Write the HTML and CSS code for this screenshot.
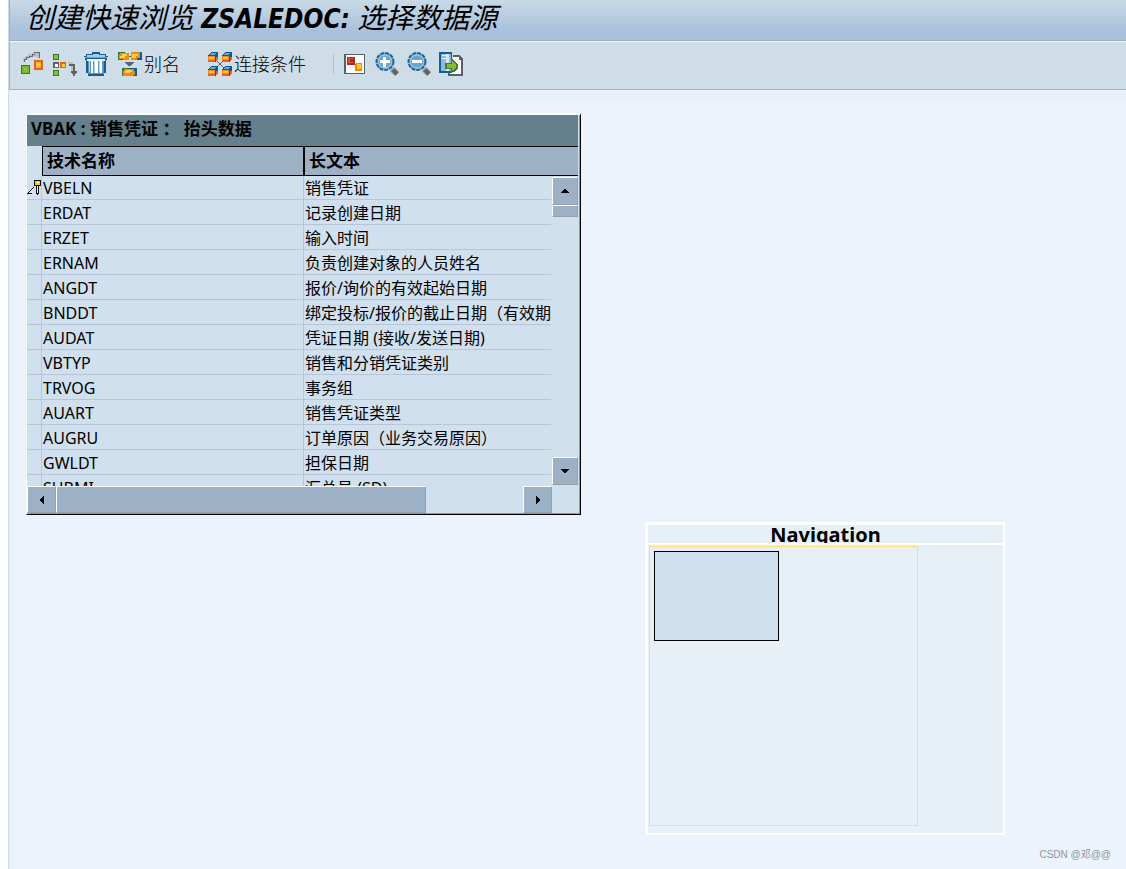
FILE: index.html
```html
<!DOCTYPE html>
<html lang="zh-CN">
<head>
<meta charset="utf-8">
<title>创建快速浏览 ZSALEDOC: 选择数据源</title>
<link rel="stylesheet" href="styles.css">
</head>
<body>
<div class="app">
  <header class="title-bar">
    <h1 class="title">创建快速浏览 <b class="title-name">ZSALEDOC:</b> 选择数据源</h1>
  </header>
  <div class="toolbar" role="toolbar" aria-label="工具栏">
    <button class="tool" type="button" aria-label="插入表">
      <svg class="icon" viewBox="0 0 24 24" shape-rendering="crispEdges">
        <path d="M4 10V7h2V5h3V3h4V2h3M13 1h5v5M17 2l-3 3" fill="none" stroke="#b9bfc4" stroke-width="2"/>
        <path d="M4 10V7h2V5h3V4h3V2h3M14 .5h5v5" fill="none" stroke="#646a6e"/>
        <path fill="#3a7434" d="M1 13h9v9H1z"/><path fill="#7cb82f" d="M2 14h7v7H2z"/><path fill="#8fc840" d="M4 16h3v3H4z"/>
        <path fill="#e2622b" d="M14 8h9v10h-9z"/><path fill="#fbb81f" d="M16 10h5v6h-5z"/><path fill="#ffd23a" d="M17 11h3v3h-3z"/>
      </svg>
    </button>
    <button class="tool" type="button" aria-label="建议连接">
      <svg class="icon" viewBox="0 0 24 24" shape-rendering="crispEdges">
        <path fill="#3a7434" d="M1 2h6v6H1zM1 18h6v6H1z"/><path fill="#86c232" d="M2 3h4v4H2zM2 19h4v4H2z"/>
        <path fill="#5f6365" d="M1 10h6v6H1z"/><path fill="#fff" d="M3 12h3v3H3z"/>
        <path fill="#e2622b" d="M8 10h6v6H8z"/><path fill="#ffcf3b" d="M10 12h3v3h-3z"/>
        <path fill="#b9bfc4" d="M16 10h5v2h-5zM19 12h2v7h-2z"/>
        <path fill="#5f6365" d="M17 12h6v7h2v2h-1v1h-1v2h-2v-2h-1v-1h-1v-2h2v-5h-4z"/>
      </svg>
    </button>
    <button class="tool" type="button" aria-label="删除">
      <svg class="icon" viewBox="0 0 24 24" shape-rendering="crispEdges">
        <path fill="#145f92" d="M8 0h8v2h6v2h2v4h-2v13h-2v3H4v-3H2V8H0V4h2V2h6z"/>
        <path fill="#a9cbe4" d="M9 2h6v1h6v2H3V3h6z"/><path fill="#cfdde8" d="M0 5h1v3H0zM23 5h1v3h-1z"/>
        <path fill="#6fa3c9" d="M1 5h22v1H1z"/><path fill="#e8f2fa" d="M3 7h18v2H3z"/>
        <path fill="#5b95be" d="M4 9h16v13H4z"/><path fill="#fff" d="M7 9h2v12H7zM11 9h3v12h-3zM16 9h2v12h-2z"/>
        <path fill="#b8d6ea" d="M5 9h1v11H5zM10 9h1v12h-1zM15 9h1v12h-1z"/>
      </svg>
    </button>
    <button class="tool tool-alias" type="button">
      <svg class="icon" viewBox="0 0 24 24" shape-rendering="crispEdges">
        <path fill="#357338" d="M0 0h7v2H2v6H0z"/><path fill="#f08a16" d="M2 1h9v7H1V5h1z"/><path fill="#ffd23a" d="M4 2h5v2H7v2H2V4h2z"/><path fill="#8abf35" d="M1 2h1v4H1z"/><path fill="#357338" d="M0 7h5v1H0z"/>
        <path fill="#085f92" d="M17 0h7v8h-5V6h3V2h-5z"/><path fill="#f08a16" d="M13 0h9v6h-3v2h-6z"/><path fill="#ffd23a" d="M14 2h6v2h-2v2h-4z"/>
        <path fill="#5f6365" d="M7 10h9v1h-1v1h-1v1h-1v1h-3v-1H9v-1H8v-1H7zM11 4h2v1h-2z"/>
        <path fill="#357338" d="M4 16h7v2H6v4h1v2H4z"/><path fill="#085f92" d="M11 16h8v8h-8z"/><path fill="#f08a16" d="M6 17h10v2h1v4h-2v1H5v-5h1z"/><path fill="#ffd23a" d="M8 18h6v2h-2v1H7v-2h1z"/>
      </svg>
      <span>别名</span>
    </button>
    <button class="tool tool-join" type="button">
      <svg class="icon" viewBox="0 0 24 24" shape-rendering="crispEdges">
        <defs><g id="cube">
          <path fill="#075c91" d="M3 0h7v7H9v2H8v1H6V4H0V3h1V2h1V1h1z"/><path fill="#68a6cf" d="M3 1h5v1H7v1H2V2h1z"/>
          <path fill="#f08a16" d="M0 4h7v5H0z"/><path fill="#ffc438" d="M1 5h5v2H1z"/><path fill="#e4632a" d="M0 8h7v2H0zM8 5h2v3H9v1H8z"/>
        </g></defs>
        <path d="M8 8l8 8M16 8l-8 8" stroke="#5f6365" stroke-width="1"/>
        <use href="#cube"/><use href="#cube" x="14"/><use href="#cube" y="14"/><use href="#cube" x="14" y="14"/>
      </svg>
      <span>连接条件</span>
    </button>
    <span class="divider"></span>
    <button class="tool" type="button" aria-label="导航">
      <svg class="icon" viewBox="0 0 24 24" shape-rendering="crispEdges">
        <path fill="#5b6064" d="M1 2h21v20H1z"/><path fill="#fff" d="M3 3h18v18H3z"/>
        <path fill="#b7261b" d="M4 5h8v8H4z"/><path fill="#d9532c" d="M5 6h5v5H5z"/><path fill="#b7261b" d="M7 7h3v3H7z"/>
        <path fill="#ef8614" d="M13 11h6v8h-7v-7h1z"/><path fill="#ffce2e" d="M14 12h4v5h-4z"/>
      </svg>
    </button>
    <button class="tool" type="button" aria-label="放大">
      <svg class="icon" viewBox="0 0 24 24">
        <path d="M17 17l5 5" stroke="#8d9499" stroke-width="6"/><path d="M18 18l4 4" stroke="#5f6365" stroke-width="4"/>
        <circle cx="10" cy="9.500" r="8.500" fill="#82b2d4" stroke="#1c6698" stroke-width="2" stroke-dasharray="4 1"/>
        <circle cx="10" cy="9.500" r="6.500" fill="#6ca3ca" stroke="#a9cbe2"/>
        <path fill="#fff" d="M8 5h3v3h4v3h-4v4H8v-4H5V8h3z"/>
      </svg>
    </button>
    <button class="tool" type="button" aria-label="缩小">
      <svg class="icon" viewBox="0 0 24 24">
        <path d="M17 17l5 5" stroke="#8d9499" stroke-width="6"/><path d="M18 18l4 4" stroke="#5f6365" stroke-width="4"/>
        <circle cx="10" cy="9.500" r="8.500" fill="#82b2d4" stroke="#1c6698" stroke-width="2" stroke-dasharray="4 1"/>
        <circle cx="10" cy="9.500" r="6.500" fill="#6ca3ca" stroke="#a9cbe2"/>
        <path fill="#fff" d="M5 8h10v3H5z"/>
      </svg>
    </button>
    <button class="tool" type="button" aria-label="导出">
      <svg class="icon" viewBox="0 0 24 24" shape-rendering="crispEdges">
        <path fill="#5b6064" d="M14 3h7v1h1v1h1v1h1v18H9v-3h5z"/><path fill="#fff" d="M14 5h6v3h2v14H11v-1h3z"/>
        <path fill="#126094" d="M0 0h13v21H0z"/><path fill="#8dbbdc" d="M2 2h10v17H2z"/><path fill="#d5e7f3" d="M7 2h3v17H7z"/><path fill="#fff" d="M3 3h4v1H3zM3 6h4v1H3z"/>
        <path fill="#4c7829" d="M6 11h6V7h2v1h1v1h1v1h1v1h1v1h1v5h-1v1h-1v1h-1v1h-4v-3H6z"/><path fill="#82bc32" d="M8 12h5V9h1v1h1v1h1v1h1v4h-1v1h-1v1h-2v-2H8z"/>
      </svg>
    </button>
  </div>
  <main class="workspace">
    <section class="entity" aria-label="VBAK">
      <h2 class="entity-title">VBAK : 销售凭证 ： 抬头数据</h2>
      <div class="entity-view">
        <table class="fields">
          <colgroup><col class="col-key"><col class="col-name"><col class="col-text"><col class="col-bar"></colgroup>
          <thead><tr><td class="corner"></td><th scope="col">技术名称</th><th scope="col" colspan="2">长文本</th></tr></thead>
          <tbody>
            <tr class="key-row"><td><svg class="key" viewBox="0 0 15 17" shape-rendering="crispEdges"><path fill="#111" d="M7 1h7v6h-2v8h-1v1h-1v-1H9V7H7zM0 14h5v1H0zM1 13h1v1H1zM2 12h1v1H2zM3 11h1v1H3zM4 10h1v1H4zM5 9h1v1H5zM6 8h1v1H6z"/><path fill="#f3cc18" d="M8 2h5v4H8z"/><path fill="#fff" d="M10 3h2v1h-2zM10 7h1v7h-1z"/></svg></td><td>VBELN</td><td>销售凭证</td><td></td></tr>
            <tr><td></td><td>ERDAT</td><td>记录创建日期</td><td></td></tr>
            <tr><td></td><td>ERZET</td><td>输入时间</td><td></td></tr>
            <tr><td></td><td>ERNAM</td><td>负责创建对象的人员姓名</td><td></td></tr>
            <tr><td></td><td>ANGDT</td><td>报价/询价的有效起始日期</td><td></td></tr>
            <tr><td></td><td>BNDDT</td><td>绑定投标/报价的截止日期（有效期</td><td></td></tr>
            <tr><td></td><td>AUDAT</td><td>凭证日期 (接收/发送日期)</td><td></td></tr>
            <tr><td></td><td>VBTYP</td><td>销售和分销凭证类别</td><td></td></tr>
            <tr><td></td><td>TRVOG</td><td>事务组</td><td></td></tr>
            <tr><td></td><td>AUART</td><td>销售凭证类型</td><td></td></tr>
            <tr><td></td><td>AUGRU</td><td>订单原因（业务交易原因）</td><td></td></tr>
            <tr><td></td><td>GWLDT</td><td>担保日期</td><td></td></tr>
            <tr><td></td><td>SUBMI</td><td>汇总号 (SD)</td><td></td></tr>
          </tbody>
        </table>
        <div class="vbar">
          <button class="bar-btn" type="button" aria-label="向上滚动"><svg class="arrow" viewBox="0 0 8 8" shape-rendering="crispEdges"><path d="M3 2h2v1h1v1h1v1h1v1H0V5h1V4h1V3h1z"/></svg></button>
          <div class="vthumb"></div>
          <button class="bar-btn bar-end" type="button" aria-label="向下滚动"><svg class="arrow" viewBox="0 0 8 8" shape-rendering="crispEdges"><path d="M0 2h8v1H7v1H6v1H5v1H3V5H2V4H1V3H0z"/></svg></button>
        </div>
      </div>
      <div class="hbar">
        <button class="bar-btn" type="button" aria-label="向左滚动"><svg class="arrow" viewBox="0 0 8 8" shape-rendering="crispEdges"><path d="M6 0v8H5V7H4V6H3V5H2V3h1V2h1V1h1V0z"/></svg></button>
        <div class="hthumb"></div>
        <button class="bar-btn bar-end" type="button" aria-label="向右滚动"><svg class="arrow" viewBox="0 0 8 8" shape-rendering="crispEdges"><path d="M2 0v8h1V7h1V6h1V5h1V3H5V2H4V1H3V0z"/></svg></button>
      </div>
    </section>
    <section class="navigator">
      <h2 class="navigator-title">Navigation</h2>
      <div class="navigator-map"><div class="viewport"><div class="map-node"></div></div></div>
    </section>
    <small class="watermark">CSDN @邓@@</small>
  </main>
</div>
</body>
</html>
```

FILE: styles.css
```css
* { box-sizing: border-box; }

body {
  margin: 0;
  background: #fcfdfe;
  color: #000;
  font: 16px/24px "Noto Sans", "Noto Sans CJK SC", sans-serif;
}

h1, h2 { margin: 0; }

button {
  margin: 0;
  padding: 0;
  border: 0;
  color: inherit;
  font: inherit;
}

.app {
  display: flex;
  flex-direction: column;
  min-height: 100vh;
  margin-left: 8px;
  border-left: 1px solid #cfd9e6;
  background: #e8f0f9;
}

.title-bar {
  height: 41px;
  padding-left: 16px;
  border-bottom: 1px solid #9db1c8;
  border-left: 1px solid #9db1c8;
  background: linear-gradient(#c9dae7, #a9c1db 75%);
}

.title {
  font-size: 28px;
  line-height: 34px;
  font-weight: 400;
  font-style: italic;
  white-space: nowrap;
}

.title-name {
  font-family: "DejaVu Sans Condensed", "DejaVu Sans", sans-serif;
  font-size: 26px;
  font-weight: 700;
}

.toolbar {
  display: flex;
  align-items: center;
  gap: 8px;
  height: 49px;
  padding: 0 0 3px 10px;
  border: solid #a3b6c9;
  border-width: 0 0 1px 1px;
  border-top: 1px solid #f2f7fb;
  background: #cfdde8;
}

.tool {
  display: flex;
  align-items: center;
  gap: 2px;
  background: none;
  font-size: 18px;
  font-weight: 300;
}

.tool-alias { margin-left: 2px; }
.tool-join { margin-left: 20px; }

.icon {
  display: block;
  width: 24px;
  height: 24px;
  overflow: visible;
}

.divider {
  width: 1px;
  height: 20px;
  margin: 0 1px 0 19px;
  background: #a9c1dc;
}

.workspace {
  position: relative;
  flex: 1;
  margin: 12px 0 0 5px;
  background: #ecf3fc;
}

.entity {
  position: absolute;
  top: 11px;
  left: 12px;
  width: 555px;
  border: solid #fff;
  border-width: 2px 1px 1px 1px;
  border-right-color: #000;
  border-bottom-color: #000;
  background: #d1e0ef;
  box-shadow: inset -1px -1px #8f989f;
}

.entity-title {
  height: 31px;
  margin-right: 2px;
  padding-left: 4px;
  background: #65808d;
  font-size: 17px;
  line-height: 28px;
}

.entity-view {
  position: relative;
  height: 340px;
  margin-right: 2px;
  overflow: hidden;
}

.fields {
  width: 100%;
  border-spacing: 0;
  table-layout: fixed;
}

.col-key { width: 15px; }
.col-name { width: 262px; }
.col-bar { width: 27px; }

.fields th {
  height: 30px;
  padding: 0 0 0 4px;
  border: 1px solid #000;
  background: #9db1c6;
  font-size: 17px;
  line-height: 28px;
  text-align: left;
}

.fields th:last-child { border-right: 0; }

.fields td {
  height: 25px;
  padding: 2px 0 0 1px;
  border: solid #b7c6d6;
  border-width: 0 1px 1px 0;
  overflow: hidden;
  line-height: 22px;
  white-space: nowrap;
}

.fields td:nth-child(n+3) { border-right: 0; }
.fields td:last-child { border: 0; }
.fields td:first-child { padding: 0; }
.fields .corner { border: 0; }
.fields .key-row td { height: 24px; line-height: 21px; }

.key {
  display: block;
  width: 15px;
  height: 17px;
}

.vbar {
  position: absolute;
  top: 31px;
  right: 0;
  bottom: 1px;
  display: flex;
  flex-direction: column;
  width: 26px;
}

.bar-btn, .vthumb, .hthumb {
  border: 1px solid #fff;
  border-right-color: #999fa5;
  border-bottom-color: #999fa5;
  background: #9db1c6;
}

.bar-btn {
  display: flex;
  align-items: center;
  justify-content: center;
  width: 28px;
  height: 28px;
}

.vbar .bar-btn { width: 26px; }
.vthumb { height: 12px; }
.vbar .bar-end { margin-top: auto; }

.arrow { width: 8px; height: 8px; }

.hbar {
  display: flex;
  height: 27px;
  margin: 0 28px 1px 0;
}

.hbar .bar-btn { width: 29px; height: 27px; }
.hthumb { width: 370px; }
.hbar .bar-end { margin-left: auto; }

.navigator {
  position: absolute;
  top: 420px;
  left: 631px;
  width: 360px;
  border: 2px solid #fff;
  border-top-width: 3px;
  border-left-width: 3px;
  background: #e8f0f7;
}

.navigator-title {
  height: 20px;
  border-bottom: 2px solid #fff;
  overflow: hidden;
  font-size: 20px;
  line-height: 20px;
  text-align: center;
}

.navigator-map {
  height: 288px;
  padding: 1px;
}

.viewport {
  width: 269px;
  height: 280px;
  padding: 4px;
  border: 1px solid #ffdc7d;
}

.map-node {
  width: 125px;
  height: 90px;
  border: 1px solid #000;
  background: #d1e0ef;
}

.watermark {
  position: absolute;
  right: 15px;
  bottom: 5px;
  color: #8f959b;
  font: 10px/18px "Liberation Sans", "Noto Sans CJK SC", sans-serif;
}
```
